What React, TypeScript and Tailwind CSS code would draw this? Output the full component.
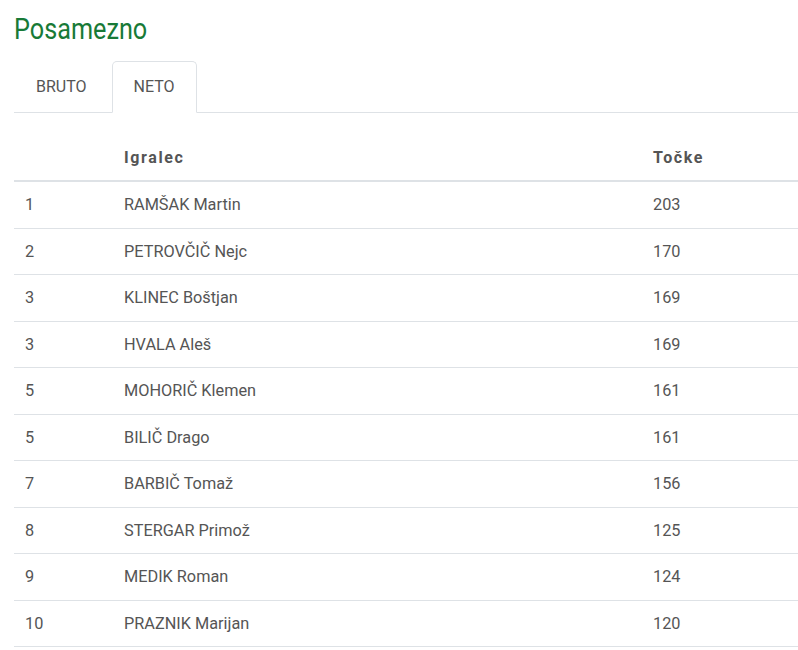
import { useState } from "react";

type Row = { rank: number; name: string; points: number };

const NETO: Row[] = [
  { rank: 1, name: "RAMŠAK Martin", points: 203 },
  { rank: 2, name: "PETROVČIČ Nejc", points: 170 },
  { rank: 3, name: "KLINEC Boštjan", points: 169 },
  { rank: 3, name: "HVALA Aleš", points: 169 },
  { rank: 5, name: "MOHORIČ Klemen", points: 161 },
  { rank: 5, name: "BILIČ Drago", points: 161 },
  { rank: 7, name: "BARBIČ Tomaž", points: 156 },
  { rank: 8, name: "STERGAR Primož", points: 125 },
  { rank: 9, name: "MEDIK Roman", points: 124 },
  { rank: 10, name: "PRAZNIK Marijan", points: 120 },
];

const TABS = ["BRUTO", "NETO"];

export default function App() {
  const [tab, setTab] = useState("NETO");

  return (
    <div
      className="min-h-screen bg-white pl-[14px] pt-[10px] text-[#555]"
      style={{ fontFamily: "Roboto, 'Noto Sans', sans-serif" }}
    >
      <h2 className="inline-block origin-left scale-x-[0.87] text-[29px] leading-[38px] text-[#187a37]">
        Posamezno
      </h2>

      {/* Tabs */}
      <div className="mt-[13px] flex gap-[3px] border-b border-[#dee2e6]">
        {TABS.map((t) => (
          <button
            key={t}
            onClick={() => setTab(t)}
            className={
              "-mb-px rounded-t-[5px] border px-[21px] py-[14px] text-[16px] leading-[22px] " +
              (tab === t ? "border-[#dee2e6] border-b-white bg-white" : "border-transparent")
            }
          >
            {t}
          </button>
        ))}
      </div>

      {/* Table */}
      <table className="mt-[23px] w-full border-collapse text-[16.3px]">
        <thead>
          <tr className="border-b-2 border-[#dee2e6]">
            <th className="w-[98px] px-[11px] py-[12px] text-left" />
            <th className="w-[529px] px-[12px] py-[11px] text-left text-[16px] font-bold leading-[22px] tracking-[1.6px]">
              Igralec
            </th>
            <th className="px-[12px] py-[11px] text-left text-[16px] font-bold leading-[22px] tracking-[1.6px]">
              Točke
            </th>
          </tr>
        </thead>
        <tbody>
          {NETO.map((r, i) => (
            <tr key={i} className="border-b border-[#dee2e6]">
              <td className="px-[11px] py-[12px] leading-[21.5px]">{r.rank}</td>
              <td className="px-[12px] py-[12px] leading-[21.5px]">{r.name}</td>
              <td className="px-[12px] py-[12px] leading-[21.5px]">{r.points}</td>
            </tr>
          ))}
        </tbody>
      </table>
    </div>
  );
}
